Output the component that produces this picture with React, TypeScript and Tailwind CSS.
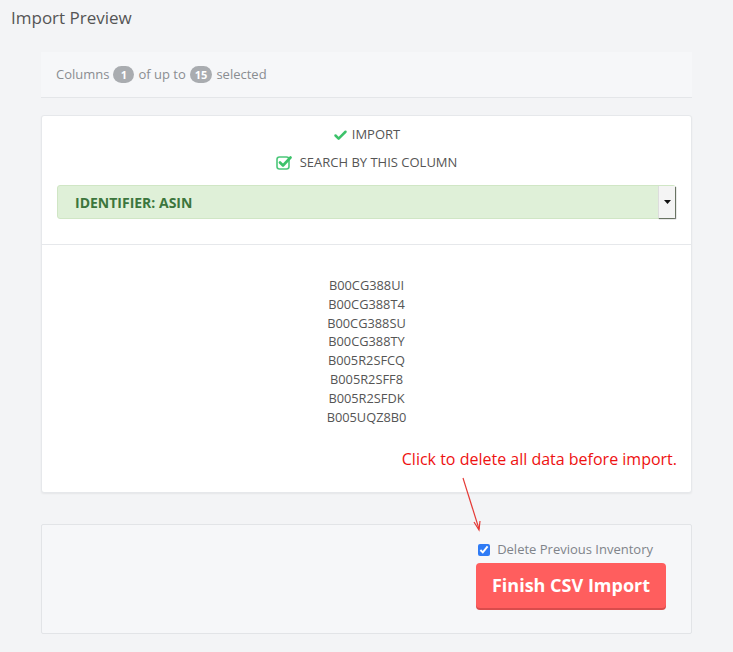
import { Check } from 'lucide-react';

const ids = ['B00CG388UI', 'B00CG388T4', 'B00CG388SU', 'B00CG388TY', 'B005R2SFCQ', 'B005R2SFF8', 'B005R2SFDK', 'B005UQZ8B0'];

function Badge({ n }: { n: string }) {
  return (
    <span className="inline-flex items-center justify-center h-[17px] min-w-[21px] px-[5px] rounded-full bg-[#a9acb0] text-white text-[11px] font-bold leading-none mx-[4px]">
      {n}
    </span>
  );
}

export default function App() {
  return (
    <div className="min-h-[652px] bg-[#f3f4f6] font-['Open_Sans',sans-serif] pt-[6px]">
      <h1 className="pl-[11px] text-[17px] leading-[24px] text-[#555] font-normal">Import Preview</h1>

      <div className="mx-[41px] w-[651px] mt-[22px]">
        {/* header */}
        <div className="h-[46px] bg-[#f6f7f9] border-b border-[#e4e6e9] flex items-center pl-[15px] text-[13px] text-[#8a8d91]">
          Columns <Badge n="1" /> of up to <Badge n="15" /> selected
        </div>

        {/* card */}
        <div className="mt-[17px] bg-white rounded-[3px] border border-[#e6e8eb] shadow-[0_1px_2px_rgba(0,0,0,0.06)] h-[378px] flex flex-col">
          <div className="px-[15px] pt-[9px] pb-[25px] border-b border-[#e6e8eb]">
            <div className="flex items-center justify-center gap-[4px] text-[13px] text-[#555] h-[20px]">
              <Check size={15} strokeWidth={4} className="text-[#3cc26a]" />
              <span>IMPORT</span>
            </div>
            <div className="flex items-center justify-center gap-[8px] text-[13px] text-[#555] h-[20px] mt-[8px]">
              <svg width="16" height="16" viewBox="0 0 16 16" className="-mt-[1px]">
                <rect x="1" y="2" width="12" height="12" rx="2.5" fill="none" stroke="#4cc77a" strokeWidth="1.6" />
                <path d="M4 7.5 L7 10.5 L14.5 2.5" fill="none" stroke="#3cc26a" strokeWidth="2.6" strokeLinecap="round" strokeLinejoin="round" />
              </svg>
              <span>SEARCH BY THIS COLUMN</span>
            </div>
            <div className="mt-[12px] h-[34px] bg-[#dff0d8] border border-[#d0e6c5] rounded-[3px] flex items-center justify-between">
              <span className="pl-[17px] text-[14px] font-bold text-[#3c763d]">IDENTIFIER: ASIN</span>
              <span className="h-[32px] w-[17px] bg-[#f4f4f4] border-l border-[#ddd] shadow-[1px_1px_1px_rgba(0,0,0,0.5)] flex items-center justify-center">
                <svg width="7" height="4" viewBox="0 0 7 4"><path d="M0 0h7L3.5 4z" fill="#111" /></svg>
              </span>
            </div>
          </div>

          <div className="flex flex-col items-center pt-[31px] text-[12.8px] leading-[18.8px] text-[#555]">
            {ids.map(id => (
              <div key={id}>{id}</div>
            ))}
          </div>

          <div className="flex justify-end pr-[14px] mt-[22px]">
            <span className="text-[16px] text-[#ee1111] leading-[22px]">Click to delete all data before import.</span>
          </div>
        </div>

        {/* footer */}
        <div className="relative mt-[31px] h-[110px] bg-[#f6f7f9] border border-[#e2e4e7] rounded-[2px] flex flex-col items-end pr-[25px] pt-[17px]">
          <svg className="absolute left-[416px] top-[-48px]" width="30" height="58" viewBox="0 0 30 58">
            <path d="M5 1 L21 52" stroke="#e53935" strokeWidth="1.2" fill="none" />
            <path d="M16 45 L21 53 L22 44" stroke="#e53935" strokeWidth="1.2" fill="none" />
          </svg>
          <label className="flex items-center gap-[7px] text-[13px] text-[#80848a] h-[16px] mr-[13px]">
            <input type="checkbox" defaultChecked className="w-[12px] h-[12px] accent-[#2f7bf5] m-0" />
            Delete Previous Inventory
          </label>
          <button className="mt-[5px] w-[190px] h-[45px] rounded-[4px] bg-[#ff5e5e] shadow-[0_2px_0_#d94c4c] text-white text-[18px] font-bold">
            Finish CSV Import
          </button>
        </div>
      </div>
    </div>
  );
}
